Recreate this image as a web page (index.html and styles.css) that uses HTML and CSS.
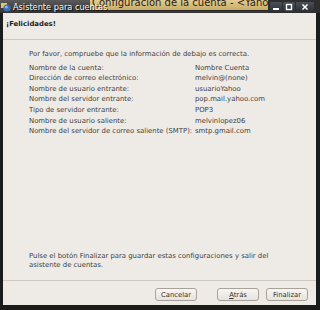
FILE: index.html
```html
<!DOCTYPE html>
<html lang="es">
<head>
    <meta charset="UTF-8">
    <meta name="viewport" content="width=device-width, initial-scale=1.0">
    <title>Asistente para cuentas</title>
    <link rel="stylesheet" href="styles.css">
</head>
<body>
    <!-- Title bar (dialog + parent window behind) -->
    <div class="titlebar">
        <div class="title-left">
            <svg class="app-icon" width="10" height="10" viewBox="0 0 10 10">
                <rect x="0" y="1" width="6" height="5" fill="#e8c65a"/>
                <circle cx="6" cy="6" r="3.6" fill="#3d6fb8"/>
                <circle cx="5.3" cy="5.2" r="1.4" fill="#8fb4e8"/>
            </svg>
            <span>Asistente para cuentas</span>
        </div>
        <div class="parent-title"><span>Configuración de la cuenta - &lt;Yahoo</span></div>
        <div class="win-buttons">
            <span class="wb">
                <svg width="8" height="8" viewBox="0 0 8 8"><rect x="1" y="5" width="6" height="2" fill="#fff"/></svg>
            </span>
            <span class="wb">
                <svg width="8" height="8" viewBox="0 0 8 8"><rect x="1.5" y="1.5" width="5" height="5" fill="none" stroke="#fff" stroke-width="1.4"/></svg>
            </span>
            <span class="wb wide">
                <svg width="8" height="8" viewBox="0 0 8 8"><path d="M1.5 1.5 L6.5 6.5 M6.5 1.5 L1.5 6.5" stroke="#fff" stroke-width="1.5"/></svg>
            </span>
        </div>
    </div>

    <div class="dialog">
        <div class="header">¡Felicidades!</div>

        <div class="content">
            <p class="intro">Por favor, compruebe que la información de debajo es correcta.</p>

            <div class="summary">
                <span>Nombre de la cuenta:</span><span>Nombre Cuenta</span>
                <span>Dirección de correo electrónico:</span><span>melvin@(none)</span>
                <span>Nombre de usuario entrante:</span><span>usuarioYahoo</span>
                <span>Nombre del servidor entrante:</span><span>pop.mail.yahoo.com</span>
                <span>Tipo de servidor entrante:</span><span>POP3</span>
                <span>Nombre de usuario saliente:</span><span>melvinlopez06</span>
                <span>Nombre del servidor de correo saliente (SMTP):</span><span>smtp.gmail.com</span>
            </div>

            <p class="outro">Pulse el botón Finalizar para guardar estas configuraciones y salir del asistente de cuentas.</p>
        </div>

        <div class="actions">
            <button>Cancelar</button>
            <button class="back"><u>A</u>trás</button>
            <button>Finalizar</button>
        </div>
    </div>
</body>
</html>
```

FILE: styles.css
```css
body {
    margin: 0;
    background: #1c1c1c;
    font-family: "DejaVu Sans", sans-serif;
    width: 320px;
    height: 310px;
    overflow: hidden;
}

/* Title bar */
.titlebar {
    height: 13px;
    display: flex;
    background: linear-gradient(#5a5a5a, #333);
    overflow: hidden;
}

.title-left {
    width: 90px;
    display: flex;
    align-items: center;
    gap: 2px;
    padding-top: 1px;
    color: #f4f4f4;
    font-size: 8.2px;
    white-space: nowrap;
    text-shadow: 1px 1px 0 #111;
    position: relative;
    z-index: 1;
}

.app-icon {
    flex: none;
    margin-left: 1px;
}

.parent-title {
    width: 178px;
    height: 11px;
    background: linear-gradient(#e2cc92, #c8ac68);
    border-bottom: 1px solid #2a2a2a;
    padding-left: 2px;
    box-sizing: border-box;
    overflow: hidden;
    white-space: nowrap;
}

.parent-title span {
    display: block;
    margin-top: -3px;
    font-size: 10px;
    line-height: 12px;
    color: #2a2414;
}

.win-buttons {
    flex: 1;
    display: flex;
    align-items: center;
    gap: 1px;
    padding-left: 2px;
    background: #2e2e2e;
}

.wb {
    width: 12px;
    height: 10px;
    display: flex;
    align-items: center;
    justify-content: center;
    background: linear-gradient(#4a4f58, #2b2e34);
    border-radius: 1px;
}

.wb.wide {
    width: 18px;
}

/* Dialog */
.dialog {
    margin: 0 4px 0 3px;
    height: 292px;
    background: #eeebe7;
    display: flex;
    flex-direction: column;
    color: #404040;
    font-size: 6.9px;
}

.header {
    height: 27px;
    box-sizing: border-box;
    padding: 7px 0 0 3px;
    font-weight: bold;
    font-size: 6.9px;
    color: #222;
    border-bottom: 1px solid #cdc8c0;
}

.content {
    flex: 1;
    padding: 9px 0 0 26px;
    display: flex;
    flex-direction: column;
}

.intro {
    margin: 0 0 3px;
    line-height: 10.6px;
}

.summary {
    display: grid;
    grid-template-columns: 166px auto;
    line-height: 10.6px;
}

.outro {
    margin: auto 30px 10px 0;
    line-height: 9px;
}

.actions {
    height: 25px;
    box-sizing: border-box;
    border-top: 1px solid #cdc8c0;
    display: flex;
    justify-content: flex-end;
    align-items: flex-start;
    padding: 7px 8px 0 0;
    gap: 7px;
}

.actions button {
    width: 42px;
    height: 13px;
    padding: 0;
    font-family: "DejaVu Sans", sans-serif;
    font-size: 6.8px;
    color: #333;
    background: linear-gradient(#f7f6f4, #e6e2dc);
    border: 1px solid #a8a198;
    border-radius: 3px;
}

.actions button.back {
    margin-left: 13px;
}
```
